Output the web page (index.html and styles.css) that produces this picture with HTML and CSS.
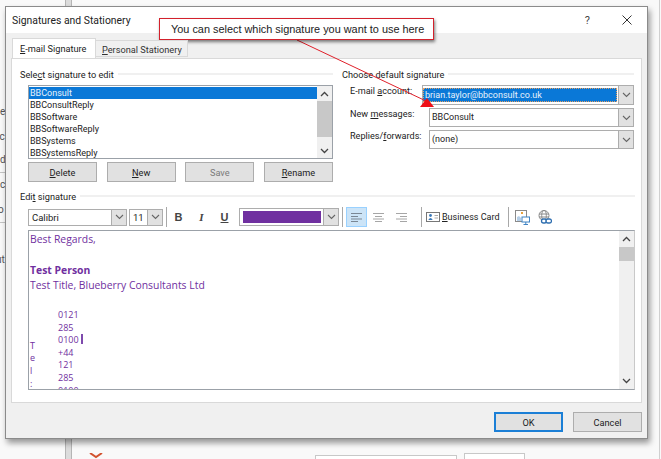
FILE: index.html
```html
<!DOCTYPE html>
<html lang="en">
<head>
<meta charset="utf-8">
<title>Signatures and Stationery</title>
<link rel="stylesheet" href="styles.css">
</head>
<body>
<div class="desktop">
  <div class="bg-rail"></div>
  <div class="bg-edge"></div>
  <div class="bg-line b1"></div>
  <div class="bg-line b2"></div>
  <div class="bg-letter l1">e</div>
  <div class="bg-letter l2">Ac</div>
  <div class="bg-letter l3">d</div>
  <div class="bg-letter l4">ce</div>
  <div class="bg-letter l5">o</div>
  <div class="bg-letter l6">ut</div>
  <svg class="bg-chevron" width="14" height="7" viewBox="0 0 14 7"><path d="M1 0 L7 4 L13 0" fill="none" stroke="#d2532f" stroke-width="2"/></svg>
  <div class="bg-field f1"></div>
  <div class="bg-field f2"></div>

  <div class="dialog">
    <header class="titlebar">
      <span class="title">Signatures and Stationery</span>
      <span class="help">?</span>
      <svg class="close" width="10" height="10" viewBox="0 0 10 10"><path d="M0.5 0.5 L9.5 9.5 M9.5 0.5 L0.5 9.5" stroke="#333" stroke-width="1" fill="none"/></svg>
    </header>

    <nav class="tabs">
      <div class="tab active"><u>E</u>-mail Signature</div>
      <div class="tab"><u>P</u>ersonal Stationery</div>
    </nav>

    <main class="panel">
      <div class="top-grid">
        <section class="left-col">
          <div class="legend"><span>Sele<u>c</u>t signature to edit</span><i></i></div>
          <div class="listbox">
            <ul class="list">
              <li class="selected">BBConsult</li>
              <li>BBConsultReply</li>
              <li>BBSoftware</li>
              <li>BBSoftwareReply</li>
              <li>BBSystems</li>
              <li>BBSystemsReply</li>
            </ul>
            <div class="scroll list-scroll">
              <svg class="chev" width="9" height="6" viewBox="0 0 9 6"><path d="M1 5 L4.5 1.5 L8 5" fill="none" stroke="#444" stroke-width="1.3"/></svg>
              <div class="track"><div class="thumb thumb-list"></div></div>
              <svg class="chev" width="9" height="6" viewBox="0 0 9 6"><path d="M1 1 L4.5 4.5 L8 1" fill="none" stroke="#444" stroke-width="1.3"/></svg>
            </div>
          </div>
          <div class="btn-row">
            <button class="btn"><u>D</u>elete</button>
            <button class="btn"><u>N</u>ew</button>
            <button class="btn disabled">Save</button>
            <button class="btn"><u>R</u>ename</button>
          </div>
        </section>

        <section class="right-col">
          <div class="legend"><span>Choose default signature</span><i></i></div>
          <div class="form">
            <div class="form-row first">
              <label>E-mail <u>a</u>ccount:</label>
              <div class="combo account">
                <span class="value highlighted">brian.taylor@bbconsult.co.uk</span>
                <span class="drop"><svg width="9" height="6" viewBox="0 0 9 6"><path d="M1 1 L4.5 4.5 L8 1" fill="none" stroke="#666" stroke-width="1.1"/></svg></span>
              </div>
            </div>
            <div class="form-row">
              <label>New <u>m</u>essages:</label>
              <div class="combo wide">
                <span class="value">BBConsult</span>
                <span class="drop"><svg width="9" height="6" viewBox="0 0 9 6"><path d="M1 1 L4.5 4.5 L8 1" fill="none" stroke="#666" stroke-width="1.1"/></svg></span>
              </div>
            </div>
            <div class="form-row">
              <label>Replies/<u>f</u>orwards:</label>
              <div class="combo wide">
                <span class="value">(none)</span>
                <span class="drop"><svg width="9" height="6" viewBox="0 0 9 6"><path d="M1 1 L4.5 4.5 L8 1" fill="none" stroke="#666" stroke-width="1.1"/></svg></span>
              </div>
            </div>
          </div>
        </section>
      </div>

      <section class="edit">
        <div class="legend"><span>Edi<u>t</u> signature</span><i></i></div>
        <div class="toolbar">
          <div class="combo font-combo"><span class="value">Calibri</span><span class="drop"><svg width="9" height="6" viewBox="0 0 9 6"><path d="M1 1 L4.5 4.5 L8 1" fill="none" stroke="#666" stroke-width="1.1"/></svg></span></div>
          <div class="combo size-combo"><span class="value">11</span><span class="drop"><svg width="9" height="6" viewBox="0 0 9 6"><path d="M1 1 L4.5 4.5 L8 1" fill="none" stroke="#666" stroke-width="1.1"/></svg></span></div>
          <span class="sep s-a"></span>
          <span class="fmt bold">B</span>
          <span class="fmt italic">I</span>
          <span class="fmt under">U</span>
          <div class="combo color-combo"><span class="swatch"></span><span class="drop"><svg width="9" height="6" viewBox="0 0 9 6"><path d="M1 1 L4.5 4.5 L8 1" fill="none" stroke="#666" stroke-width="1.1"/></svg></span></div>
          <span class="sep s-b"></span>
          <span class="align on">
            <svg width="11" height="9" viewBox="0 0 11 9"><path d="M0 .5H11M0 3.5H7M0 6H11M0 8.5H7" stroke="#7a8794" fill="none"/></svg>
          </span>
          <span class="align mid">
            <svg width="11" height="9" viewBox="0 0 11 9"><path d="M0 .5H11M2 3.5H9M0 6H11M2 8.5H9" stroke="#a6a6a6" fill="none"/></svg>
          </span>
          <span class="align">
            <svg width="11" height="9" viewBox="0 0 11 9"><path d="M0 .5H11M4 3.5H11M0 6H11M4 8.5H11" stroke="#a6a6a6" fill="none"/></svg>
          </span>
          <span class="sep s-c"></span>
          <svg class="card-icon" width="14" height="10" viewBox="0 0 14 10"><rect x=".5" y=".5" width="13" height="9" fill="#fff" stroke="#777"/><circle cx="4.5" cy="3.5" r="1.4" fill="#3b79b8"/><path d="M2.3 8 Q4.5 3.8 6.7 8Z" fill="#3b79b8"/><path d="M8.5 3.5H12M8.5 6H12" stroke="#aaa"/></svg>
          <span class="card-label"><u>B</u>usiness Card</span>
          <span class="sep s-d"></span>
          <svg class="pic-icon" width="15" height="15" viewBox="0 0 15 15"><rect x=".5" y=".5" width="11" height="11" fill="#fff" stroke="#8a8a8a"/><rect x="6" y="2" width="2" height="2" fill="#e9a23b"/><path d="M2 11 V7 L4 6 L6 8 V11Z" fill="#b6cfe8"/><rect x="7" y="7" width="7.5" height="5" fill="#fff" stroke="#3f83c4"/><path d="M10.8 12V14M8.5 14.5H13" stroke="#3f83c4"/></svg>
          <svg class="globe-icon" width="14" height="14" viewBox="0 0 14 14"><circle cx="6" cy="5.5" r="5" fill="#fff" stroke="#8a8a8a"/><ellipse cx="6" cy="5.5" rx="2.3" ry="5" fill="none" stroke="#8a8a8a"/><path d="M1 4H11M1 7H11" stroke="#8a8a8a"/><rect x="3.5" y="9" width="5" height="4" rx="2" fill="#fff" stroke="#2f6fb0" stroke-width="1.3"/><rect x="8" y="9" width="5.5" height="4" rx="2" fill="#fff" stroke="#2f6fb0" stroke-width="1.3"/></svg>
        </div>

        <div class="editor">
          <div class="doc">
            <p>Best Regards,</p>
            <p class="blank">&nbsp;</p>
            <p class="strong">Test Person</p>
            <p>Test Title, Blueberry Consultants Ltd</p>
            <div class="sig-table">
              <div class="tel"><span>T</span><span>e</span><span>l</span><span>:</span></div>
              <div class="num">
                <span>0121</span><span>285</span><span>0100 <b class="caret"></b></span><span>+44</span><span>121</span><span>285</span><span>0100</span>
              </div>
            </div>
          </div>
          <div class="scroll editor-scroll">
            <svg class="chev" width="9" height="6" viewBox="0 0 9 6"><path d="M1 5 L4.5 1.5 L8 5" fill="none" stroke="#444" stroke-width="1.3"/></svg>
            <div class="track"><div class="thumb thumb-editor"></div></div>
            <svg class="chev" width="9" height="6" viewBox="0 0 9 6"><path d="M1 1 L4.5 4.5 L8 1" fill="none" stroke="#444" stroke-width="1.3"/></svg>
          </div>
        </div>
      </section>
    </main>

    <footer class="footer">
      <button class="btn action default">OK</button>
      <button class="btn action">Cancel</button>
    </footer>
  </div>

  <svg class="arrow" width="661" height="459" viewBox="0 0 661 459">
    <path d="M297 40 L426 101" stroke="#e0202a" stroke-width="1" fill="none"/>
    <polygon points="420,107 427,98 434,107" fill="#ee0f17"/>
  </svg>
  <div class="callout">You can select which signature you want to use here</div>
</div>
</body>
</html>
```

FILE: styles.css
```css
* { box-sizing: border-box; }
html, body { margin: 0; padding: 0; }
body {
  width: 661px;
  height: 459px;
  overflow: hidden;
  background: #fff;
  font-family: Roboto, "Open Sans", sans-serif;
  font-size: 9.2px;
  color: #222;
}
u { text-underline-offset: 1px; }
.desktop { position: relative; width: 661px; height: 459px; overflow: hidden; background: #f9f9f9; }

.bg-rail { position: absolute; left: 65px; top: 0; width: 7px; height: 459px; background: #dcdcdc; border-left: 1px solid #b5b5b5; border-right: 1px solid #b5b5b5; }
.bg-edge { position: absolute; left: 659px; top: 0; width: 1px; height: 459px; background: #d0d0d0; }
.bg-line { position: absolute; left: 0; width: 5px; height: 1px; background: #c4c4c4; }
.b1 { top: 172px; }
.b2 { top: 222px; }
.bg-letter { position: absolute; left: 0; font-size: 10px; color: #555; }
.l1 { top: 106px; }
.l2 { top: 131px; left: -7px; }
.l3 { top: 154px; }
.l4 { top: 179px; }
.l5 { top: 204px; left: -2px; }
.l6 { top: 254px; left: -4px; }
.bg-chevron { position: absolute; left: 89px; top: 453px; }
.bg-field { position: absolute; top: 455px; height: 10px; background: #fff; border: 1px solid #c8c8c8; }
.f1 { left: 315px; width: 142px; }
.f2 { left: 464px; top: 453px; width: 61px; }

.dialog {
  position: absolute;
  left: 5px;
  top: 6px;
  width: 643px;
  height: 433px;
  background: #f0f0f0;
  border: 1px solid #8b8b8b;
  box-shadow: 2px 4px 6px rgba(0, 0, 0, .4);
  display: flex;
  flex-direction: column;
}

.titlebar { height: 26px; background: #fff; display: flex; align-items: center; padding: 0 15px 0 6px; flex: none; }
.title { font-size: 10.4px; color: #222; flex: 1; }
.help { font-size: 11px; margin-right: 32px; color: #444; }
.close { margin-bottom: 1px; }

.tabs { height: 25px; padding: 6px 0 0 6px; display: flex; align-items: flex-end; flex: none; position: relative; z-index: 1; }
.tab { height: 17px; width: 92px; padding: 3px 0 0 6px; background: #f0f0f0; border: 1px solid #d9d9d9; border-left: 0; margin-bottom: 1px; font-size: 9.2px; text-align: left; color: #333; }
.tab.active { height: 20px; width: 84px; background: #fff; border-left: 1px solid #d9d9d9; border-bottom: 0; margin-bottom: 0; padding: 4px 0 0 7px; color: #222; }

.panel { height: 345px; margin: 0 6px 0 5px; padding: 9px 6px 0 8px; background: #fff; border: 1px solid #d9d9d9; flex: none; width: 631px; }

.top-grid { display: grid; grid-template-columns: 313px 292px; column-gap: 9px; }
.legend { display: flex; align-items: center; gap: 4px; height: 12px; font-size: 9.2px; color: #222; }
.legend i { flex: 1; height: 2px; background: #f0f0f0; }

.listbox { margin: 5px 0 0 8px; width: 305px; height: 74px; border: 1px solid #9ba1a8; display: flex; background: #fff; }
.list { list-style: none; margin: 1px 0 0; padding: 0; flex: 1; }
.list li { height: 12px; line-height: 12px; padding-left: 1px; font-size: 9px; color: #222; white-space: nowrap; }
.list li.selected { background: #0a78d7; color: #e8f2fb; }

.scroll { width: 15px; background: #f0f0f0; display: flex; flex-direction: column; align-items: center; flex: none; }
.chev { flex: none; margin: 5px 0; }
.track { flex: 1; width: 100%; }
.thumb { width: 100%; background: #c8c8c8; }
.thumb-list { height: 36px; }
.thumb-editor { height: 14px; }
.list-scroll .chev { margin: 5px 0 4px; }

.btn-row { margin: 3px 0 0 8px; width: 305px; display: flex; justify-content: space-between; }
.btn {
  font-family: inherit;
  font-size: 9.2px;
  padding: 0;
  width: 69px;
  height: 20px;
  background: #e1e1e1;
  border: 1px solid #adadad;
  color: #222;
}
.btn.disabled { color: #7a7a7a; }

.form { margin: 5px 0 0 8px; display: flex; flex-direction: column; gap: 3px; }
.form-row { display: flex; align-items: flex-start; }
.form-row label { width: 79px; font-size: 9.1px; color: #222; padding-top: 1px; white-space: nowrap; }
.form-row.first label { width: 72px; }
.combo { display: flex; height: 19px; background: #fff; border: 1px solid #adadad; align-items: stretch; }
.combo.account { width: 212px; height: 20px; }
.combo.wide { width: 205px; }
.value { flex: 1; font-size: 9px; color: #222; padding-left: 2px; line-height: 17px; white-space: nowrap; overflow: hidden; }
.value.highlighted { background: #0a78d7; color: #e8f2fb; margin: 2px 1px 2px 0; line-height: 14px; outline: 1px dotted #e8a060; outline-offset: -1px; }
.drop { width: 15px; background: #e1e1e1; border-left: 1px solid #adadad; display: flex; align-items: center; justify-content: center; flex: none; }

.edit { margin-top: 8px; }
.toolbar { display: flex; align-items: center; height: 20px; margin: 5px 0 0 8px; }
.font-combo { width: 99px; height: 17px; margin-right: 2px; }
.size-combo { width: 34px; height: 17px; }
.toolbar .value { font-size: 9.5px; line-height: 15px; padding-left: 3px; }
.sep { width: 1px; height: 20px; background: #a8a8a8; flex: none; }
.s-a { margin: 0 0 0 3px; }
.fmt { width: 23px; text-align: center; font-family: "Liberation Sans", sans-serif; font-size: 11px; color: #444; flex: none; font-weight: bold; }
.fmt.italic { font-style: italic; font-family: "Liberation Serif", serif; }
.fmt.under { text-decoration: underline; margin-right: 3px; }
.color-combo { width: 100px; height: 18px; }
.swatch { flex: 1; background: #7030a0; margin: 2px 2px 2px 3px; }
.s-b { margin: 0 3px 0 3px; }
.align { width: 21px; height: 20px; display: flex; align-items: center; justify-content: center; flex: none; }
.align.on { background: #cce4f7; border: 1px solid #99d1ff; margin-right: 1px; }
.align.mid { margin-right: 2px; }
.s-c { margin: 0 4px 0 9px; }
.card-icon { margin-right: 2px; flex: none; }
.card-label { font-size: 9px; color: #222; width: 66px; white-space: nowrap; }
.s-d { margin-right: 6px; }
.pic-icon { margin-right: 8px; flex: none; }

.editor { margin: 3px 0 0 8px; width: 607px; height: 160px; display: flex; border: 1px solid #9ba1a8; border-right-color: #c9c9c9; background: #fff; overflow: hidden; }
.doc { flex: 1; padding: 1px 0 0 1px; color: #7030a0; font-size: 10.4px; line-height: 15px; overflow: hidden; font-family: "Open Sans", sans-serif; }
.doc p { margin: 0; }
.doc p.blank { height: 16px; }
.doc p.strong { font-weight: 700; }
.sig-table { display: flex; margin-top: 16px; align-items: flex-end; }
.tel { width: 28px; display: flex; flex-direction: column; font-size: 9px; line-height: 12.6px; margin-bottom: 7px; }
.num { display: flex; flex-direction: column; font-size: 9px; line-height: 12.6px; }
.caret { display: inline-block; width: 2px; height: 10px; background: #7e4aad; vertical-align: -1px; }

.footer { flex: 1; display: flex; justify-content: flex-end; align-items: flex-start; gap: 10px; padding: 9px 5px 0 0; }
.btn.action { width: 69px; height: 20px; }
.btn.default { border: 2px solid #1b7fd6; }

.arrow { position: absolute; left: 0; top: 0; pointer-events: none; }
.callout {
  position: absolute;
  left: 159px;
  top: 18px;
  width: 275px;
  height: 22px;
  background: #fff;
  border: 1px solid #d3212c;
  box-shadow: 1px 2px 3px rgba(0, 0, 0, .5);
  font-family: "Liberation Sans", Arial, sans-serif;
  font-size: 10.9px;
  line-height: 20px;
  padding-left: 11px;
  color: #222;
  white-space: nowrap;
}
```
